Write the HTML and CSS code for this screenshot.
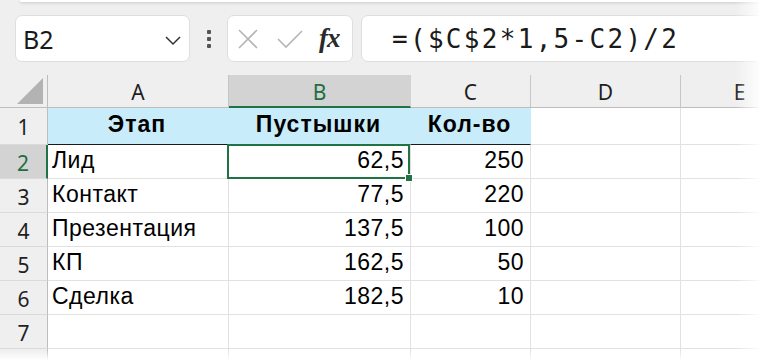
FILE: index.html
```html
<!DOCTYPE html>
<html lang="ru">
<head>
<meta charset="utf-8">
<title>Excel</title>
<link rel="stylesheet" href="styles.css">
</head>
<body>
<div class="app">
  <div class="ribbon-edge"></div>
  <div class="formula-bar">
    <div class="namebox">
      <span class="namebox-text">B2</span>
      <svg class="chevron" width="18" height="12" viewBox="0 0 18 12"><path d="M2 3 L9 10 L16 3" fill="none" stroke="#333" stroke-width="1.5"/></svg>
    </div>
    <div class="dots"><span></span><span></span><span></span></div>
    <div class="fxbox">
      <svg class="icon-x" width="22" height="22" viewBox="0 0 22 22"><path d="M2 2 L20 20 M20 2 L2 20" stroke="#b5b5b5" stroke-width="1.6" fill="none"/></svg>
      <svg class="icon-check" width="28" height="20" viewBox="0 0 28 20"><path d="M2 10 L10 18 L26 2" stroke="#b5b5b5" stroke-width="1.6" fill="none"/></svg>
      <span class="fx">fx</span>
    </div>
    <div class="formula">=($C$2*1,5-C2)/2</div>
  </div>

  <div class="sheet">
    <div class="corner"><svg width="27" height="27" viewBox="0 0 27 27"><path d="M0 26 L26 0 L26 26 Z" fill="#b3b3b3"/></svg></div>
    <div class="colhead">A</div>
    <div class="colhead selected">B</div>
    <div class="colhead">C</div>
    <div class="colhead">D</div>
    <div class="colhead last">E</div>

    <div class="rowhead r1">1</div>
    <div class="cell fill head">Этап</div>
    <div class="cell fill head">Пустышки</div>
    <div class="cell fill head">Кол-во</div>
    <div class="cell r1"></div>
    <div class="cell r1"></div>

    <div class="rowhead selected">2</div>
    <div class="cell">Лид</div>
    <div class="cell num active">62,5<span class="handle"></span></div>
    <div class="cell num">250</div>
    <div class="cell"></div>
    <div class="cell"></div>

    <div class="rowhead">3</div>
    <div class="cell">Контакт</div>
    <div class="cell num">77,5</div>
    <div class="cell num">220</div>
    <div class="cell"></div>
    <div class="cell"></div>

    <div class="rowhead">4</div>
    <div class="cell">Презентация</div>
    <div class="cell num">137,5</div>
    <div class="cell num">100</div>
    <div class="cell"></div>
    <div class="cell"></div>

    <div class="rowhead">5</div>
    <div class="cell">КП</div>
    <div class="cell num">162,5</div>
    <div class="cell num">50</div>
    <div class="cell"></div>
    <div class="cell"></div>

    <div class="rowhead">6</div>
    <div class="cell">Сделка</div>
    <div class="cell num">182,5</div>
    <div class="cell num">10</div>
    <div class="cell"></div>
    <div class="cell"></div>

    <div class="rowhead">7</div>
    <div class="cell"></div>
    <div class="cell"></div>
    <div class="cell"></div>
    <div class="cell"></div>
    <div class="cell"></div>

    <div class="rowhead"></div>
    <div class="cell"></div>
    <div class="cell"></div>
    <div class="cell"></div>
    <div class="cell"></div>
    <div class="cell"></div>
  </div>
  <div class="fade-right"></div>
  <div class="fade-bottom"></div>
</div>
</body>
</html>
```
FILE: styles.css
```css
* { box-sizing: border-box; }
html, body {
  margin: 0;
  padding: 0;
  width: 759px;
  height: 360px;
  overflow: hidden;
  background: #ffffff;
}
.app {
  position: relative;
  width: 759px;
  height: 360px;
  overflow: hidden;
  background: #efefef;
  font-family: "Liberation Sans", Arial, sans-serif;
  color: #000;
}
.ribbon-edge {
  height: 2px;
  margin-left: 20px;
  background: #ffffff;
  border-bottom-left-radius: 6px;
  box-shadow: 0 1px 3px rgba(0,0,0,0.18);
}
.formula-bar {
  display: flex;
  align-items: center;
  height: 47px;
  margin-top: 13px;
  padding-left: 15px;
  margin-right: -40px;
}
.namebox {
  width: 175px;
  height: 47px;
  background: #fff;
  border: 1px solid #dedede;
  border-radius: 7px;
  display: flex;
  align-items: center;
  justify-content: space-between;
  padding: 0 7px 0 7px;
}
.namebox-text {
  font-family: "Noto Sans", "Liberation Sans", sans-serif;
  font-size: 25px;
  color: #1a1a1a;
}
.chevron { margin-top: 2px; }
.dots {
  width: 37px;
  display: flex;
  flex-direction: column;
  align-items: center;
  gap: 3px;
}
.dots span {
  width: 4px;
  height: 4px;
  background: #555;
  border-radius: 1px;
}
.fxbox {
  width: 126px;
  height: 47px;
  background: #fff;
  border: 1px solid #dedede;
  border-radius: 7px;
  display: flex;
  align-items: center;
  padding: 0 8px 0 9px;
}
.icon-x { margin-right: 17px; }
.icon-check { margin-right: 15px; }
.fx {
  font-family: "Liberation Serif", "DejaVu Serif", serif;
  font-style: italic;
  font-weight: bold;
  font-size: 27px;
  color: #2a2a2a;
  letter-spacing: -1px;
}
.formula {
  flex: 1;
  height: 47px;
  margin-left: 8px;
  background: #fff;
  border: 1px solid #dedede;
  border-radius: 7px;
  display: flex;
  align-items: center;
  padding-left: 30px;
  font-family: "DejaVu Sans Mono", "Liberation Mono", monospace;
  font-size: 26px;
  letter-spacing: 2.3px;
  color: #1a1a1a;
}

.sheet {
  margin-top: 13px;
  display: grid;
  grid-template-columns: 48px 181px 182px 120px 150px 118px;
  grid-template-rows: 33px 37px repeat(7, 34px);
  background: #fff;
}
.corner {
  background: #efefef;
  border-right: 1px solid #bdbdbd;
  border-bottom: 1px solid #bdbdbd;
  display: flex;
  align-items: flex-end;
  justify-content: flex-end;
  padding: 0 3px 2px 0;
}
.corner svg { display: block; }
.colhead {
  background: #efefef;
  border-right: 1px solid #c6c6c6;
  border-bottom: 1px solid #bdbdbd;
  display: flex;
  align-items: center;
  justify-content: center;
  font-family: "Noto Sans", "Liberation Sans", sans-serif;
  font-size: 21px;
  color: #1f1f1f;
  padding-top: 2px;
}
.colhead.selected {
  background: #d3d3d3;
  color: #1e6e42;
  border-bottom: 2px solid #217346;
  border-right-color: #d3d3d3;
}
.rowhead {
  background: #efefef;
  border-right: 1px solid #bdbdbd;
  border-bottom: 1px solid #dadada;
  display: flex;
  align-items: center;
  justify-content: center;
  font-family: "Noto Sans", "Liberation Sans", sans-serif;
  font-size: 21px;
  color: #1f1f1f;
  padding-top: 2px;
}
.rowhead.selected {
  background: #d3d3d3;
  color: #1e6e42;
  border-right: 2px solid #217346;
}
.cell {
  position: relative;
  border-right: 1px solid #e1e1e1;
  border-bottom: 1px solid #e1e1e1;
  display: flex;
  align-items: flex-end;
  padding: 0 6px 4px 4px;
  font-size: 23px;
  letter-spacing: 0.5px;
  white-space: nowrap;
}
.cell.num { justify-content: flex-end; }
.cell.fill {
  background: #c9ecfa;
  border-right-color: #c9ecfa;
  border-bottom-color: #1a1a1a;
}
.cell.head {
  justify-content: center;
  font-weight: bold;
  letter-spacing: 1px;
  padding-bottom: 6px;
}
.cell.active::before {
  content: "";
  position: absolute;
  left: -2px;
  top: -1px;
  right: 0;
  bottom: -1px;
  border: 2px solid #217346;
}
.handle {
  position: absolute;
  right: -3px;
  bottom: -4px;
  width: 8px;
  height: 8px;
  background: #217346;
  border: 1px solid #fff;
  z-index: 2;
}
.fade-right {
  position: absolute;
  top: 0;
  right: 0;
  width: 24px;
  height: 360px;
  background: linear-gradient(to right, rgba(255,255,255,0), rgba(255,255,255,0.85));
}
.fade-bottom {
  position: absolute;
  left: 0;
  bottom: 0;
  width: 759px;
  height: 10px;
  background: linear-gradient(to bottom, rgba(255,255,255,0), rgba(255,255,255,0.95));
}
```
